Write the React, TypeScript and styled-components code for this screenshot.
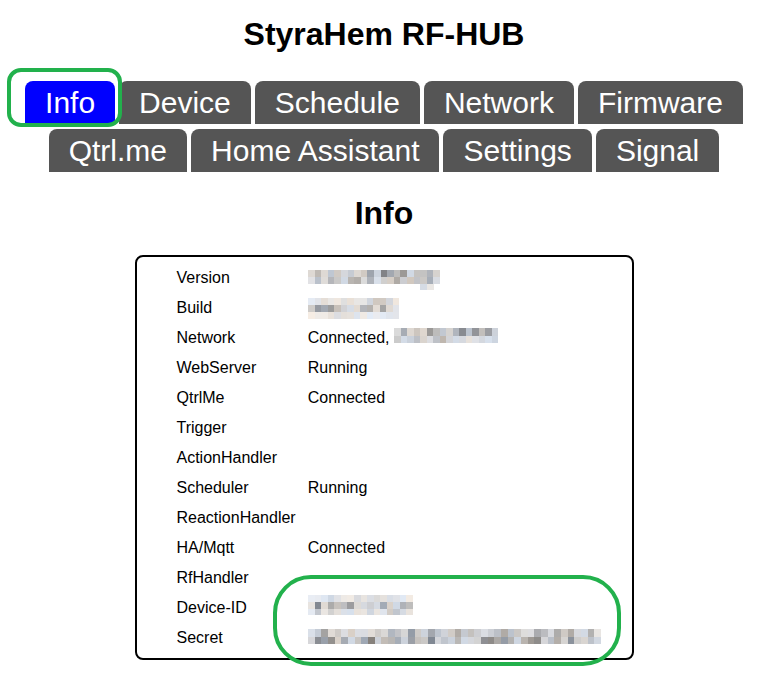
import React from 'react';
import styled, { createGlobalStyle } from 'styled-components';

const GlobalStyle = createGlobalStyle`
  html, body { margin: 0; padding: 0; background: #ffffff; }
  body { font-family: "Liberation Sans", Arial, Helvetica, sans-serif; color: #000000; }
`;

const Page = styled.div`
  position: relative;
  width: 768px;
  padding: 16px 0 20px;
`;

const Title = styled.h1`
  margin: 0 0 28px;
  font-size: 32px;
  line-height: 37px;
  font-weight: bold;
  text-align: center;
`;

const TabBar = styled.nav`
  display: flex;
  flex-wrap: wrap;
  justify-content: center;
  column-gap: 4px;
  row-gap: 5px;
`;

const Tab = styled.button<{ $active?: boolean }>`
  border: none;
  margin: 0;
  padding: 4px 20px;
  font-family: inherit;
  font-size: 30px;
  line-height: 35px;
  color: #ffffff;
  background: ${(p) => (p.$active ? '#0000ff' : '#555555')};
  border-radius: 8px 8px 0 0;
  cursor: pointer;
`;

const SectionTitle = styled.h2`
  margin: 23px 0 23px;
  font-size: 32px;
  line-height: 37px;
  font-weight: bold;
  text-align: center;
`;

const InfoBox = styled.div`
  box-sizing: border-box;
  width: 499px;
  margin: 0 auto;
  border: 2px solid #000000;
  border-radius: 8px;
  padding: 6px 0 5px 40px;
`;

const InfoGrid = styled.div`
  display: grid;
  grid-template-columns: max-content 1fr;
  column-gap: 12px;
  font-size: 16px;
  line-height: 30px;
`;

const Label = styled.div`
  white-space: nowrap;
`;

const Value = styled.div`
  display: flex;
  align-items: center;
  white-space: pre;
  height: 30px;
`;

const MosaicSvg = styled.svg<{ $dy: number }>`
  display: block;
  flex: none;
  transform: translateY(${(p) => p.$dy}px);
`;

const Annotation = styled.div<{ $x: number; $y: number; $w: number; $h: number; $r: number }>`
  position: absolute;
  box-sizing: border-box;
  left: ${(p) => p.$x}px;
  top: ${(p) => p.$y}px;
  width: ${(p) => p.$w}px;
  height: ${(p) => p.$h}px;
  border: 4.5px solid #22b14c;
  border-radius: ${(p) => p.$r}px;
  pointer-events: none;
`;

function mulberry32(a: number) {
  return function () {
    a |= 0;
    a = (a + 0x6d2b79f5) | 0;
    let t = Math.imul(a ^ (a >>> 15), 1 | a);
    t = (t + Math.imul(t ^ (t >>> 7), 61 | t)) ^ t;
    return ((t ^ (t >>> 14)) >>> 0) / 4294967296;
  };
}

type MosaicRow = { l: number; h: number; from?: number; to?: number };

function Mosaic({ cols, rows, seed, width, dy = 0 }: { cols: number; rows: MosaicRow[]; seed: number; width: number; dy?: number }) {
  const rand = mulberry32(seed);
  const cw = width / cols;
  const height = rows.reduce((s, r) => s + r.h, 0);
  const rects: React.ReactNode[] = [];
  let y = 0;
  rows.forEach((row, ri) => {
    const from = row.from ?? 0;
    const to = row.to ?? cols;
    for (let c = from; c < to; c++) {
      const r = rand();
      let dark = row.l * (0.2 + 0.8 * r * r);
      if (c === 0 || c === cols - 1) dark *= 0.5;
      const g = Math.round(240 - dark * 125);
      const warm = rand() > 0.5;
      const t = Math.round(rand() * 9);
      const R = Math.min(255, g + (warm ? t : -t));
      const G = Math.min(255, g);
      const B = Math.min(255, g + (warm ? -t : t + 3));
      rects.push(
        <rect key={`${ri}-${c}`} x={c * cw} y={y} width={cw + 0.3} height={row.h + 0.3} fill={`rgb(${R},${G},${B})`} />
      );
    }
    y += row.h;
  });
  return (
    <MosaicSvg $dy={dy} width={width} height={height} viewBox={`0 0 ${width} ${height}`} shapeRendering="crispEdges">
      {rects}
    </MosaicSvg>
  );
}

const tabsRow = ['Info', 'Device', 'Schedule', 'Network', 'Firmware', 'Qtrl.me', 'Home Assistant', 'Settings', 'Signal'];

type Item = { label: string; value?: React.ReactNode };

const items: Item[] = [
  { label: 'Version', value: <Mosaic seed={11} cols={20} width={132} dy={2} rows={[{ l: 0.9, h: 7 }, { l: 0.6, h: 7 }, { l: 0.3, h: 6, from: 17, to: 19 }]} /> },
  { label: 'Build', value: <Mosaic seed={23} cols={14} width={91} rows={[{ l: 0.35, h: 7 }, { l: 0.8, h: 7 }, { l: 0.2, h: 7 }]} /> },
  {
    label: 'Network',
    value: (
      <>
        {'Connected, '}
        <Mosaic seed={37} cols={16} width={104} dy={-3} rows={[{ l: 0.85, h: 8 }, { l: 0.6, h: 7 }]} />
      </>
    ),
  },
  { label: 'WebServer', value: 'Running' },
  { label: 'QtrlMe', value: 'Connected' },
  { label: 'Trigger' },
  { label: 'ActionHandler' },
  { label: 'Scheduler', value: 'Running' },
  { label: 'ReactionHandler' },
  { label: 'HA/Mqtt', value: 'Connected' },
  { label: 'RfHandler' },
  { label: 'Device-ID', value: <Mosaic seed={51} cols={16} width={105} dy={-3} rows={[{ l: 0.2, h: 7 }, { l: 0.85, h: 7 }, { l: 0.4, h: 6 }]} /> },
  { label: 'Secret', value: <Mosaic seed={77} cols={44} width={293} dy={-2} rows={[{ l: 0.75, h: 8 }, { l: 0.9, h: 7 }]} /> },
];

export default function App() {
  return (
    <Page>
      <GlobalStyle />
      <Title>StyraHem RF-HUB</Title>
      <TabBar>
        {tabsRow.map((t) => (
          <Tab key={t} $active={t === 'Info'}>
            {t}
          </Tab>
        ))}
      </TabBar>
      <SectionTitle>Info</SectionTitle>
      <InfoBox>
        <InfoGrid>
          {items.map((it) => (
            <React.Fragment key={it.label}>
              <Label>{it.label}</Label>
              <Value>{it.value ?? ''}</Value>
            </React.Fragment>
          ))}
        </InfoGrid>
      </InfoBox>
      <Annotation $x={7} $y={68} $w={115} $h={59} $r={14} />
      <Annotation $x={273} $y={575} $w={348} $h={91} $r={38} />
    </Page>
  );
}
